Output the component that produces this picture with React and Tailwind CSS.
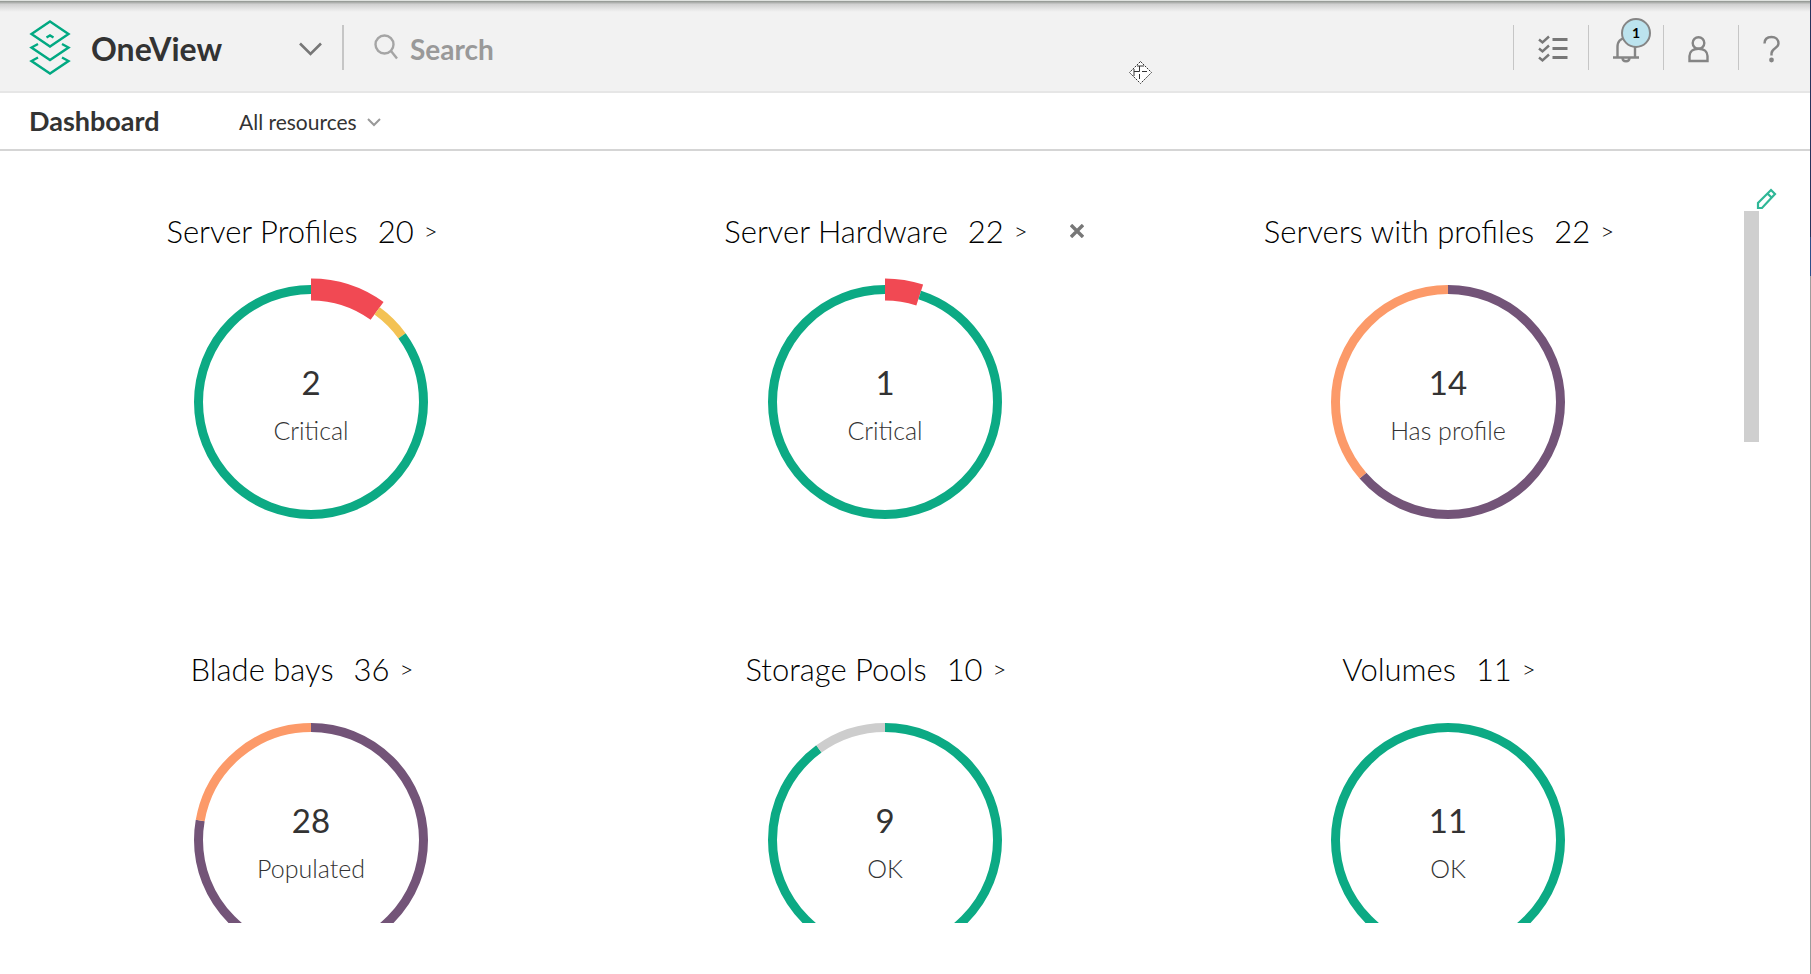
const GREEN = '#0caa84';
const RED = '#f14953';
const YELLOW = '#f3c254';
const PURPLE = '#735478';
const ORANGE = '#fc9a69';
const GREY = '#cdcdcd';

// Smallest share of the ring, in percent, that a slice may take.
const MIN_SLICE = 5;

const panels = [
  { title: 'Server Profiles', count: 20, value: 2, label: 'Critical', slices: [[2, RED, true], [1, YELLOW], [17, GREEN]] },
  { title: 'Server Hardware', count: 22, value: 1, label: 'Critical', closable: true, slices: [[1, RED, true], [21, GREEN]] },
  { title: 'Servers with profiles', count: 22, value: 14, label: 'Has profile', slices: [[14, PURPLE], [8, ORANGE]] },
  { title: 'Blade bays', count: 36, value: 28, label: 'Populated', slices: [[28, PURPLE], [8, ORANGE]] },
  { title: 'Storage Pools', count: 10, value: 9, label: 'OK', slices: [[9, GREEN], [1, GREY]] },
  { title: 'Volumes', count: 11, value: 11, label: 'OK', slices: [[11, GREEN]] },
];

function Donut({ slices }) {
  const total = slices.reduce((sum, s) => sum + s[0], 0);
  let start = 0;
  return (
    <svg className="absolute inset-0 size-full overflow-visible" viewBox="0 0 234 234" fill="none" aria-hidden="true">
      <g transform="rotate(-90 117 117)">
        {slices.map(([n, color, raised], i) => {
          const size = i === slices.length - 1 ? 100 - start : Math.max((n / total) * 100, MIN_SLICE);
          const offset = start;
          start += size;
          return (
            <circle
              key={color}
              cx="117"
              cy="117"
              r="112.5"
              pathLength="100"
              stroke={color}
              strokeWidth={raised ? 22 : 9}
              strokeDasharray={size === 100 ? undefined : `${size} ${100 - size}`}
              strokeDashoffset={-offset}
            />
          );
        })}
      </g>
    </svg>
  );
}

function Panel({ title, count, value, label, closable, slices }) {
  return (
    <section className="flex h-[438px] flex-col items-center">
      <h2 className="relative mr-[18px] text-[31px] leading-10 font-light text-black">
        <a href="#" className="flex items-center whitespace-nowrap">
          <span>{title}</span>
          <span className="ml-5">{count}</span>
          <span className="ml-2.5 text-2xl">&gt;</span>
        </a>
        {closable && (
          <button type="button" aria-label={`Remove ${title}`} className="absolute inset-y-0 left-full ml-[42px] flex items-center text-[#777]">
            <svg width="14" height="14" viewBox="0 0 14 14" fill="none" stroke="currentColor" strokeWidth="3.4" aria-hidden="true">
              <path d="M1 1 13 13M13 1 1 13" />
            </svg>
          </button>
        )}
      </h2>
      <div className="relative mt-[34px] flex size-[234px] flex-col items-center pt-[77px]">
        <Donut slices={slices} />
        <div className="text-[33px] leading-10 text-[#333]">{value}</div>
        <div className="mt-3 text-[25px] leading-8 font-light text-[#333]">{label}</div>
      </div>
    </section>
  );
}

function Logo() {
  return (
    <svg width="42" height="56" viewBox="0 0 42 56" fill="none" stroke="#01a982" strokeWidth="2.4" aria-hidden="true">
      <path d="M21 2.500 39.500 15 21 27.500 2.500 15Z" />
      <path d="M17.500 18.500 21 16.500 24.500 18.500" />
      <path d="M9 25 2.500 28.500 21 41 39.500 28.500 33 25" />
      <path d="M9 38.500 2.500 42 21 54.500 39.500 42 33 38.500" />
    </svg>
  );
}

function ChecklistIcon() {
  return (
    <svg width="30" height="28" viewBox="0 0 30 28" fill="none" stroke="#777" aria-hidden="true">
      <path strokeWidth="2.4" d="M1 4.500 4.500 7.500 11 1.500M1 13.500 4.500 16.500 11 10.500M1 22.500 4.500 25.500 11 19.500" />
      <path strokeWidth="3" d="M14.500 4.500H29.500M14.500 13.500H29.500M14.500 22.500H29.500" />
    </svg>
  );
}

function BellIcon() {
  return (
    <svg width="26" height="28" viewBox="0 0 26 28" fill="none" stroke="#858585" strokeWidth="2.4" aria-hidden="true">
      <path d="M0 22.500H26M4.500 22.500V12C4.500 6 8 3 13 3S22 6 22 12V22.500" />
      <path d="M9.500 22.500C9.500 27.500 16.500 27.500 16.500 22.500" />
    </svg>
  );
}

function UserIcon() {
  return (
    <svg width="22" height="28" viewBox="0 0 22 28" fill="none" stroke="#858585" strokeWidth="2.4" aria-hidden="true">
      <circle cx="10.500" cy="8" r="5.800" />
      <path d="M1.500 26V21C1.500 16.500 5 13.800 10.500 13.800S19.500 16.500 19.500 21V26Z" />
    </svg>
  );
}

function HelpIcon() {
  return (
    <svg width="18" height="28" viewBox="0 0 18 28" fill="none" stroke="#858585" strokeWidth="2.4" aria-hidden="true">
      <path d="M1.500 8.500C1.500 4 4.500 2 8.500 2S15.500 4.500 15.500 8.500C15.500 13.500 8.500 13 8.500 18.500V20.500" />
      <circle cx="8.500" cy="25" r="1.200" fill="#858585" />
    </svg>
  );
}

function HeaderButton({ label, className = 'w-[75px]', children }) {
  return (
    <button type="button" aria-label={label} className={`relative flex h-[45px] items-center border-l border-[#c6c6c6] pt-1 pl-6 ${className}`}>
      {children}
    </button>
  );
}

export default function App() {
  return (
    <div className="flex min-h-screen bg-white font-['Lato','Noto_Sans',sans-serif] text-[#333]">
      <div className="flex min-w-0 flex-1 flex-col">
        <header className="relative flex h-[93px] items-center border-b-2 border-[#e6e6e6] bg-[#f2f2f2] pt-[3px] pl-[29px]">
          <div className="absolute inset-x-0 top-0 h-3 border-t border-[#dfe2df] bg-linear-to-b from-[#8f948f] via-[#d0d0d0] via-30% to-[#f2f2f2]" />
          <Logo />
          <button type="button" className="ml-5 flex w-[231px] items-center justify-between pt-1 text-[32px] leading-10 font-bold">
            OneView
            <svg width="23" height="14" viewBox="0 0 23 14" fill="none" stroke="#777" strokeWidth="2.600" aria-hidden="true">
              <path d="M1 1.500 11.500 12 22 1.500" />
            </svg>
          </button>
          <label className="ml-5 flex h-[45px] flex-1 items-center border-l-2 border-[#c6c6c6] pl-[30px]">
            <svg width="24" height="26" viewBox="0 0 24 26" fill="none" stroke="#a5a5a5" strokeWidth="2.400" aria-hidden="true">
              <circle cx="10.500" cy="10.500" r="9" />
              <path d="M17 17 23 24.500" />
            </svg>
            <input type="text" aria-label="Search" placeholder="Search" className="ml-3 min-w-0 flex-1 bg-transparent pt-1 text-[28px] font-bold outline-none placeholder:text-[#999]" />
          </label>
          <nav className="flex">
            <HeaderButton label="Activity"><ChecklistIcon /></HeaderButton>
            <HeaderButton label="Alerts">
              <BellIcon />
              <span className="absolute -top-[7px] left-8 flex size-[30px] items-center justify-center rounded-full border-2 border-[#858585] bg-[#bce3ee] text-sm font-bold text-black">1</span>
            </HeaderButton>
            <HeaderButton label="Session"><UserIcon /></HeaderButton>
            <HeaderButton label="Help" className="w-[72px]"><HelpIcon /></HeaderButton>
          </nav>
          <svg className="absolute top-[61px] left-[1129px]" width="23" height="23" viewBox="0 0 23 23" fill="#fff" stroke="#333" aria-hidden="true">
            <path strokeDasharray="2 1" d="M11.500 .5 22.500 11.500 11.500 22.500 .5 11.500Z" />
            <path fill="none" d="M8 5H15M5 8V15M10.500 5V10.500H5M13 10.500H18M10.500 13V18" />
          </svg>
        </header>

        <div className="flex h-[58px] items-center border-b-2 border-[#d5d5d5] pl-[29px]">
          <h1 className="w-[210px] text-[27px] font-bold">Dashboard</h1>
          <button type="button" className="flex items-center gap-2.5 pt-0.5 text-[21px]">
            All resources
            <svg width="14" height="9" viewBox="0 0 14 9" fill="none" stroke="#999" strokeWidth="2" aria-hidden="true">
              <path d="M1 1 7 7 13 1" />
            </svg>
          </button>
        </div>

        <main className="flex">
          <div className="grid h-[772px] flex-1 grid-cols-[574fr_574fr_552fr] content-start overflow-hidden pt-[60px] pl-6">
            {panels.map((p) => <Panel key={p.title} {...p} />)}
          </div>
          <aside className="flex w-[86px] flex-col pt-[37px] pl-5">
            <button type="button" aria-label="Edit dashboard" className="ml-3">
              <svg width="21" height="22" viewBox="0 0 21 22" fill="none" stroke="#2fb797" strokeWidth="2.2" aria-hidden="true">
                <path d="M2 20V15L15 2 19 6 6 20ZM11.500 5.500 15.500 9.500" />
              </svg>
            </button>
            <div className="mt-px h-[231px] w-[15px] bg-[#cfcfcf]" />
          </aside>
        </main>
      </div>
      <div className="flex w-px flex-col">
        <div className="h-[237px] bg-[#26325b]" />
        <div className="h-[39px] bg-[#2c4f8a]" />
        <div className="flex-1 bg-[#9c9c9c]" />
      </div>
    </div>
  );
}
